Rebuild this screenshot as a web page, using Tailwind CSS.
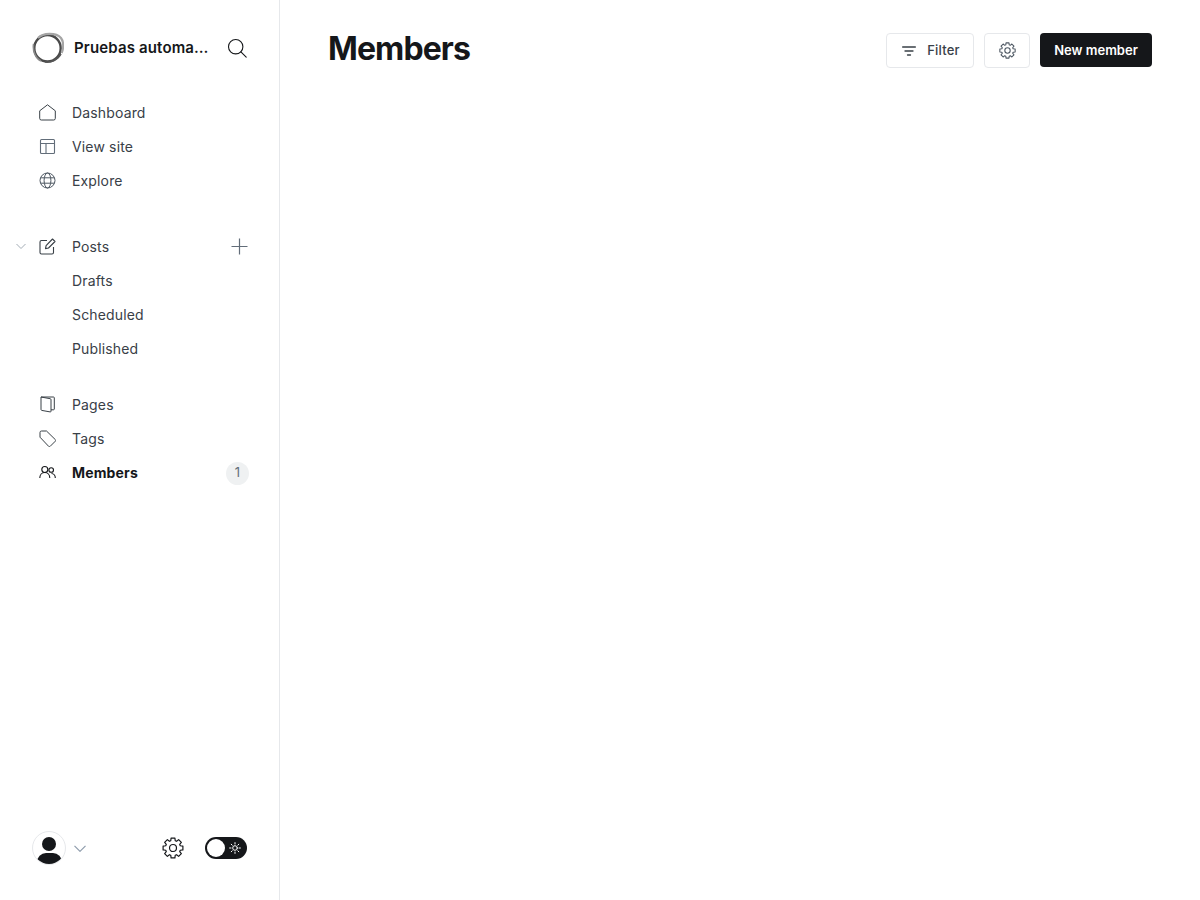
<!DOCTYPE html>
<html><head><meta charset="utf-8"><script src="https://cdn.jsdelivr.net/npm/@tailwindcss/browser@4"></script></head>
<body class="bg-white font-['Inter',sans-serif] overflow-hidden">
<div class="flex h-[900px] w-[1200px]">
<aside class="w-[280px] h-full shrink-0 border-r border-[#e6e8eb] flex flex-col pl-[32px] pr-[32px]">
  <div class="flex items-center h-[32px] mt-[32px]">
    <svg class="w-[32px] h-[32px] shrink-0" viewBox="0 0 32 32" fill="none"><ellipse cx="15.5" cy="16.2" rx="13.2" ry="13.2" stroke="#4a4a4a" stroke-width="2.4"/><path d="M6 6C11 .8 24 .3 29 6c3 4 2.600 11 .6 15" stroke="#a5a5a5" stroke-width="2.200"/><path d="M1.600 12C.6 18 3 26 9 29" stroke="#8a8a8a" stroke-width="1.600"/><path d="M13 30c6 .8 13-2 16-8" stroke="#555" stroke-width="1.600"/></svg>
    <div class="ml-[10px] text-[15px] font-semibold tracking-[0.15px] text-[#15171a] whitespace-nowrap w-[136px]">Pruebas automa…</div>
    <svg class="ml-[18px] w-[20px] h-[20px] shrink-0" viewBox="0 0 20 20" fill="none" stroke="#15171a" stroke-width="1.100" stroke-linecap="round"><circle cx="8.700" cy="8.700" r="7.200"/><path d="M13.900 13.900l5.300 5.300"/></svg>
  </div>
  <nav class="mt-[31px] text-[14px] tracking-[0.15px] text-[#394047]">
    <div class="flex items-center h-[34px] gap-[16px]"><svg class="ml-[7px] w-[17px] h-[17px] shrink-0" viewBox="0 0 17 17" fill="none" stroke="#394047" stroke-width="1" stroke-linejoin="round"><path d="M.7 6.800L8.500.8l7.800 6v7.600a1.600 1.600 0 0 1-1.600 1.600H2.300a1.600 1.600 0 0 1-1.600-1.600z"/></svg><span>Dashboard</span></div>
    <div class="flex items-center h-[34px] gap-[16px]"><svg class="ml-[7px] w-[17px] h-[17px] shrink-0" viewBox="0 0 17 17" fill="none" stroke="#626d79" stroke-width="1.100"><rect x="1.500" y="1.500" width="14" height="14" rx="1"/><path d="M1.500 5.500h14M7 5.500v10"/></svg><span>View site</span></div>
    <div class="flex items-center h-[34px] gap-[16px]"><svg class="ml-[7px] w-[17px] h-[17px] shrink-0" viewBox="0 0 17 17" fill="none" stroke="#4d5762" stroke-width="1"><circle cx="8.500" cy="8.500" r="7.500"/><ellipse cx="8.500" cy="8.500" rx="3.400" ry="7.500"/><path d="M1.600 5.800h13.800M1.600 11.200h13.800"/></svg><span>Explore</span></div>

    <div class="relative flex items-center h-[34px] gap-[16px] mt-[32px]">
      <svg class="absolute left-[-16px] top-[14px] w-[10px] h-[7px]" viewBox="0 0 10 7" fill="none" stroke="#a3acb5" stroke-width="1"><path d="M.5 1l4.500 4.500L9.500 1"/></svg>
      <svg class="ml-[7px] w-[17px] h-[17px] shrink-0" viewBox="0 0 17 17" fill="none" stroke="#394047" stroke-width="1.100" stroke-linejoin="round"><path d="M8 2.500H2.500a1.500 1.500 0 0 0-1.500 1.500v10.500A1.500 1.500 0 0 0 2.500 16h10.500a1.500 1.500 0 0 0 1.500-1.500V9"/><path d="M13.500 1l2.500 2.500-6.500 6.500-3 .6.600-3z"/></svg><span>Posts</span>
      <svg class="ml-auto mr-[-1px] w-[17px] h-[17px] shrink-0" viewBox="0 0 17 17" fill="none" stroke="#626d79" stroke-width="1.200"><path d="M8.500 .5v16M.5 8.500h16"/></svg>
    </div>
    <div class="flex items-center h-[34px] pl-[40px]">Drafts</div>
    <div class="flex items-center h-[34px] pl-[40px]">Scheduled</div>
    <div class="flex items-center h-[34px] pl-[40px]">Published</div>

    <div class="flex items-center h-[34px] gap-[16px] mt-[22px]"><svg class="ml-[7px] w-[17px] h-[17px] shrink-0" viewBox="0 0 17 17" fill="none" stroke="#394047" stroke-width="1" stroke-linejoin="round"><path d="M2 1h12.500a.8.8 0 0 1 .8.8V13a.8.8 0 0 1-.8.8H12"/><path d="M2 1l9.200 1.700a.9.900 0 0 1 .8.900V15.200a.7.700 0 0 1-.9.700L2.700 14.400A1 1 0 0 1 2 13.500z"/></svg><span>Pages</span></div>
    <div class="flex items-center h-[34px] gap-[16px]"><svg class="ml-[7px] w-[17px] h-[17px] shrink-0" viewBox="0 0 17 17" fill="none" stroke="#394047" stroke-width="1" stroke-linejoin="round"><path d="M1 2.500A1.500 1.500 0 0 1 2.500 1H7.500l8.900 8.700a1 1 0 0 1 0 1.400l-5.300 5.300a1 1 0 0 1-1.400 0L1 7.200z"/></svg><span>Tags</span></div>
    <div class="flex items-center h-[34px] gap-[16px] font-bold text-[#15171a]"><svg class="ml-[7px] w-[17px] h-[17px] shrink-0" viewBox="0 0 17 17" fill="none" stroke="#15171a" stroke-width="1.100"><circle cx="5.800" cy="5.500" r="3"/><path d="M.8 14c0-3 2-5.500 5-5.500s5 2.500 5 5.500"/><circle cx="12.200" cy="6" r="2.300"/><path d="M12.500 9.500c2.200 0 3.800 2 3.800 4.500"/></svg><span>Members</span>
      <span class="ml-auto mr-[-2px] translate-y-[1px] w-[23px] h-[23px] rounded-full bg-[#eff1f2] text-[#626d79] text-[13px] font-normal flex items-center justify-center">1</span></div>
  </nav>
  <div class="mt-auto mb-[36px] flex items-center h-[32px]">
    <div class="relative w-[34px] h-[34px] rounded-full border border-[#e6e8eb] overflow-hidden shrink-0">
      <div class="absolute left-[9px] top-[5px] w-[14px] h-[14px] rounded-full bg-[#15171a]"></div>
      <div class="absolute left-[4px] top-[21px] w-[25px] h-[18px] rounded-full bg-[#15171a]"></div>
    </div>
    <svg class="ml-[8px] w-[12px] h-[7px] shrink-0" viewBox="0 0 12 7" fill="none" stroke="#8e9cac" stroke-width="1.200"><path d="M.5 .8l5.500 5.500 5.500-5.500"/></svg>
    <svg class="ml-auto w-[22px] h-[22px] shrink-0" viewBox="0 0 24 24" fill="none" stroke="#15171a" stroke-width="1.300" stroke-linejoin="round"><polygon points="9.900,1.200 14.100,1.200 14.430,4.060 15.900,4.670 18.150,2.880 21.120,5.850 19.330,8.100 19.940,9.570 22.800,9.900 22.800,14.100 19.940,14.430 19.330,15.900 21.120,18.150 18.150,21.120 15.900,19.330 14.430,19.940 14.100,22.800 9.900,22.800 9.570,19.940 8.100,19.330 5.850,21.120 2.880,18.150 4.670,15.900 4.060,14.430 1.200,14.100 1.200,9.900 4.060,9.570 4.670,8.100 2.880,5.850 5.850,2.880 8.100,4.670 9.570,4.060"/><circle cx="12" cy="12" r="3.800"/></svg>
    <div class="ml-[21px] w-[42px] h-[22px] rounded-full bg-[#15171a] relative shrink-0">
      <div class="absolute left-[2px] top-[2px] w-[18px] h-[18px] rounded-full bg-white"></div>
      <svg class="absolute left-[24px] top-[5px] w-[12px] h-[12px]" viewBox="0 0 12 12" fill="none" stroke="#fff" stroke-width="1" stroke-linecap="round"><circle cx="6" cy="6" r="2.300"/><path d="M6 .6v1.400M6 10v1.400M.6 6H2M10 6h1.400M2.200 2.200l1 1M8.800 8.800l1 1M2.200 9.800l1-1M8.800 3.200l1-1"/></svg>
    </div>
  </div>
</aside>
<main class="flex-1 px-[48px] pt-[32px]">
  <div class="flex items-center justify-between h-[36px]">
    <h1 class="text-[32px] font-bold text-[#15171a] tracking-[-0.9px] leading-[34px] mb-[2px]">Members</h1>
    <div class="flex items-center gap-[10px]">
      <button class="h-[35px] w-[88px] pl-[2px] pt-[1px] rounded-[4px] border border-[#e6e8eb] bg-white flex items-center justify-center gap-[11px] text-[13px] tracking-[0.2px] font-medium text-[#394047]"><svg class="w-[14px] h-[10px]" viewBox="0 0 14 10" fill="none" stroke="#394047" stroke-width="1.300" stroke-linecap="round"><path d="M.6 1h12.800M3 5h8M5.500 9h3"/></svg>Filter</button>
      <button class="h-[35px] w-[46px] rounded-[4px] border border-[#e6e8eb] bg-white flex items-center justify-center"><svg class="w-[17px] h-[17px]" viewBox="0 0 24 24" fill="none" stroke="#4d5762" stroke-width="1.500" stroke-linejoin="round"><polygon points="9.900,1.200 14.100,1.200 14.430,4.060 15.900,4.670 18.150,2.880 21.120,5.850 19.330,8.100 19.940,9.570 22.800,9.900 22.800,14.100 19.940,14.430 19.330,15.900 21.120,18.150 18.150,21.120 15.900,19.330 14.430,19.940 14.100,22.800 9.900,22.800 9.570,19.940 8.100,19.330 5.850,21.120 2.880,18.150 4.670,15.900 4.060,14.430 1.200,14.100 1.200,9.900 4.060,9.570 4.670,8.100 2.880,5.850 5.850,2.880 8.100,4.670 9.570,4.060"/><circle cx="12" cy="12" r="3.800"/></svg></button>
      <button class="h-[34px] w-[112px] pt-[1px] rounded-[4px] bg-[#15171a] text-white text-[13px] font-semibold">New member</button>
    </div>
  </div>
</main>
</div>
</body></html>
